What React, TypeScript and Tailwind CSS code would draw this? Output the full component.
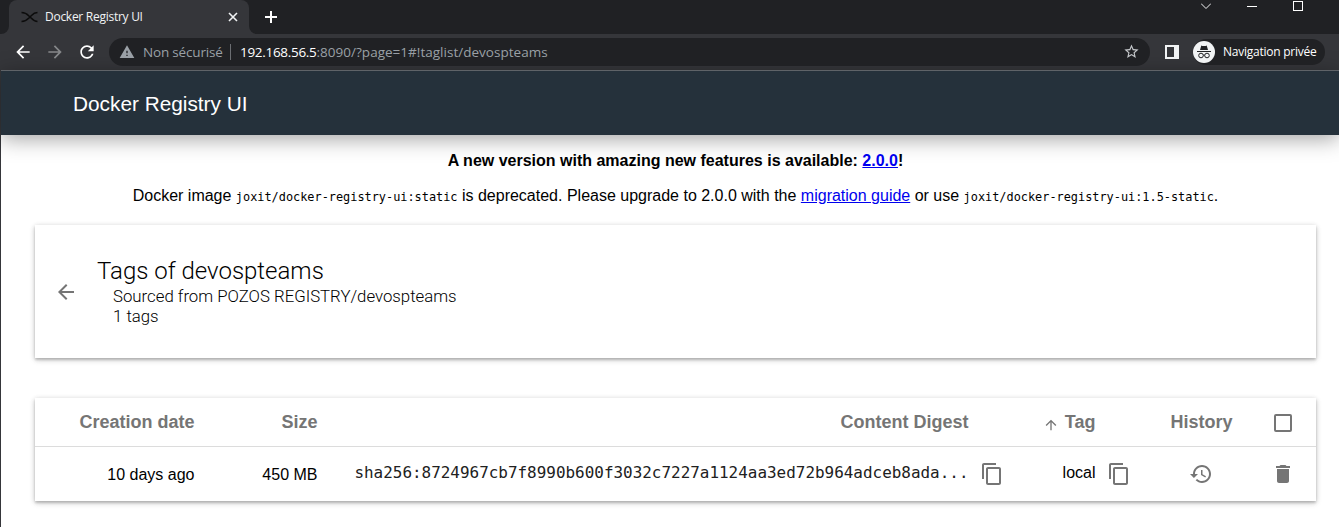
import React from "react";

const ui = "font-['Open_Sans','Noto_Sans',sans-serif]";

function Icon({ d, className }: { d: string; className: string }) {
  return (
    <svg viewBox="0 0 24 24" className={`shrink-0 fill-current ${className}`} aria-hidden="true">
      <path d={d} />
    </svg>
  );
}

const BACK = "M20 11H7.83l5.59-5.59L12 4l-8 8 8 8 1.41-1.41L7.83 13H20v-2z";
const FORWARD = "M12 4l-1.41 1.41L16.17 11H4v2h12.17l-5.58 5.59L12 20l8-8z";
const REFRESH =
  "M17.65 6.35C16.2 4.9 14.21 4 12 4c-4.42 0-7.99 3.58-7.99 8s3.57 8 7.99 8c3.73 0 6.84-2.55 7.73-6h-2.08c-.82 2.33-3.04 4-5.65 4-3.31 0-6-2.69-6-6s2.69-6 6-6c1.66 0 3.14.69 4.22 1.78L13 11h7V4l-2.35 2.35z";
const WARNING = "M1 21h22L12 2 1 21zm12-3h-2v-2h2v2zm0-4h-2v-4h2v4z";
const STAR =
  "M22 9.24l-7.19-.62L12 2 9.19 8.63 2 9.24l5.46 4.73L5.82 21 12 17.27 18.18 21l-1.63-7.03L22 9.24zM12 15.4l-3.76 2.27 1-4.28-3.32-2.88 4.38-.38L12 6.1l1.71 4.04 4.38.38-3.32 2.88 1 4.28L12 15.4z";
const COPY =
  "M16 1H4c-1.1 0-2 .9-2 2v14h2V3h12V1zm3 4H8c-1.1 0-2 .9-2 2v14c0 1.1.9 2 2 2h11c1.1 0 2-.9 2-2V7c0-1.1-.9-2-2-2zm0 16H8V7h11v14z";
const HISTORY =
  "M13 3c-4.97 0-9 4.03-9 9H1l3.89 3.89.07.14L9 12H6c0-3.87 3.13-7 7-7s7 3.13 7 7-3.13 7-7 7c-1.93 0-3.68-.79-4.94-2.06l-1.42 1.42C8.27 19.99 10.51 21 13 21c4.97 0 9-4.03 9-9s-4.03-9-9-9zm-1 5v5l4.28 2.54.72-1.21-3.5-2.08V8H12z";
const TRASH = "M6 19c0 1.1.9 2 2 2h8c1.1 0 2-.9 2-2V7H6v12zM19 4h-3.5l-1-1h-5l-1 1H5v2h14V4z";

function TabStrip() {
  return (
    <div className="flex h-[34px] items-start bg-[#202124]">
      <div className="flex h-[34px] w-[9px] items-end bg-[#35363a]">
        <div className="h-[34px] w-[9px] rounded-br-lg bg-[#202124]" />
      </div>
      <div className="flex h-[34px] w-[240px] items-center rounded-t-lg bg-[#35363a] pl-3 pr-2.5">
        <svg viewBox="0 0 18 12" className="h-3 w-[18px] fill-none stroke-[#0c0c0c] stroke-[1.5]">
          <path d="M.5 1.500c5 0 6 2 8.500 4.500s4 4.500 7.500 4.500M16.500 1.500c-4 0-5 2-7.500 4.500s-3.500 4.500-8.500 4.500" />
        </svg>
        <span className="ml-1.5 grow whitespace-nowrap text-[12px] leading-4 tracking-[-0.27px] text-[#f1f3f4]">Docker Registry UI</span>
        <svg viewBox="0 0 10 10" className="mr-px size-2.5 stroke-[#f1f3f4] stroke-[1.6]">
          <path d="M1 1l8 8M9 1l-8 8" />
        </svg>
      </div>
      <div className="flex h-[34px] w-2 bg-[#35363a]">
        <div className="h-[34px] w-2 rounded-bl-lg bg-[#202124]" />
      </div>
      <svg viewBox="0 0 12 12" className="ml-2 mt-[11px] size-3 stroke-white stroke-2">
        <path d="M6 0v12M0 6h12" />
      </svg>
      <div className="grow" />
      <svg viewBox="0 0 10 6" className="mr-[36px] mt-[3px] h-1.5 w-2.5 fill-none stroke-[#f1f3f4]">
        <path d="M0 .5l5 5 5-5" />
      </svg>
      <div className="mr-[36px] mt-1.5 h-px w-2.5 bg-white" />
      <div className="mr-9 mt-px size-2.5 border border-white" />
    </div>
  );
}

function Toolbar() {
  return (
    <div className="flex h-9 items-center bg-[#35363a] pb-px pl-[13px] pr-[14px]">
      <Icon d={BACK} className="size-[20px] text-white" />
      <Icon d={FORWARD} className="ml-3 size-[20px] text-[#86888a]" />
      <Icon d={REFRESH} className="ml-3 size-[20px] text-white" />
      <div className="ml-[12px] flex h-7 w-[1041px] items-center rounded-full bg-[#202124] pl-2.5 pr-2.5 leading-5">
        <Icon d={WARNING} className="size-4 text-[#9aa0a6]" />
        <span className="ml-2 w-[80px] whitespace-nowrap text-[13.5px] tracking-[-0.18px] text-[#9aa0a6]">Non sécurisé</span>
        <span className="ml-[7px] h-4 w-px bg-[#6b6e72]" />
        <span className="ml-[9px] grow whitespace-nowrap text-[13.5px] tracking-[-0.07px] text-[#9aa0a6]">
          <span className="tracking-[-0.3px] text-white">192.168.56.5</span>
          <span className="tracking-[0.02px]">:8090/?page=1#!taglist/devospteams</span>
        </span>
        <Icon d={STAR} className="size-[17px] text-[#c5c8cb]" />
      </div>
      <svg viewBox="0 0 14 14" className="ml-[15px] size-3.5 fill-[#f1f3f4]">
        <path fillRule="evenodd" d="M0 0h14v14H0zM2 2v10h7V2z" />
      </svg>
      <div className="ml-[14px] flex h-[26px] grow items-center rounded-full bg-[#202124]">
        <svg viewBox="0 0 22 22" className="size-[22px]">
          <circle cx="11" cy="11" r="11" fill="#f1f3f4" />
          <path d="M8.300 4.500l1 .4h3.400l1-.4 1.300 4.500H7z" fill="#202124" />
          <path d="M4 10.500h14" stroke="#202124" />
          <g fill="none" stroke="#202124">
            <circle cx="8" cy="14.500" r="2.300" />
            <circle cx="14" cy="14.500" r="2.300" />
            <path d="M10.300 14.200q.7-.5 1.400 0" />
          </g>
        </svg>
        <span className="ml-2 whitespace-nowrap text-[12px] leading-4 tracking-[-0.24px] text-white">Navigation privée</span>
      </div>
    </div>
  );
}

function Notice() {
  const code = "font-['DejaVu_Sans_Mono',monospace] text-[11.88px]";
  const link = "text-[#0000ee] underline";
  return (
    <div className="whitespace-nowrap pl-[11px] pt-[17px] text-center text-[16px] leading-[18px]">
      <p className="font-bold">
        A new version with amazing new features is available: <a className={link}>2.0.0</a>!
      </p>
      <p className="mt-[17px]">
        Docker image <code className={code}>joxit/docker-registry-ui:static</code> is deprecated. Please upgrade to 2.0.0 with the{" "}
        <a className={link}>migration guide</a> or use <code className={code}>joxit/docker-registry-ui:1.5-static</code>.
      </p>
    </div>
  );
}

const card = "ml-[34px] w-[1281px] bg-white shadow-[0_2px_2px_0_rgba(0,0,0,0.14),0_1px_5px_0_rgba(0,0,0,0.12),0_2px_6px_0_rgba(0,0,0,0.16)]";
const columns = "grid grid-cols-[159.500px_123px_651px_127px_108px_112px]";

function TagTable() {
  return (
    <div className={`${card} mt-10 h-[103px] text-[16px]`}>
      <div className={`${columns} h-[49px] items-center border-b border-[#dcdcdc] text-right text-[18px] font-bold text-[#757575]`}>
        <span>Creation date</span>
        <span>Size</span>
        <span>Content Digest</span>
        <span className="flex items-center justify-end">
          <Icon d="M4 12l1.410 1.410L11 7.830V20h2V7.830l5.580 5.590L20 12l-8-8-8 8z" className="mr-1.5 mt-1.5 size-4" />
          Tag
        </span>
        <span className="pl-[75px] text-left">History</span>
        <span className="flex pl-[70.500px]">
          <span className="mt-px size-[18px] rounded-[2px] border-2 border-[#757575]" />
        </span>
      </div>
      <div className={`${columns} h-[54px] items-center whitespace-nowrap text-right`}>
        <span className="pt-0.5">10 days ago</span>
        <span className="pt-0.5">450 MB</span>
        <span className="flex items-center justify-end">
          <span className="-mt-0.5 font-['DejaVu_Sans_Mono',monospace] text-[15.95px] text-[#212121]">sha256:8724967cb7f8990b600f3032c7227a1124aa3ed72b964adceb8ada...</span>
          <span className="-mr-[35px] ml-[11px] text-[#757575]">
            <Icon d={COPY} className="size-6" />
          </span>
        </span>
        <span className="flex items-center justify-end">
          <span className="-mt-0.5">local</span>
          <span className="-mr-[35px] ml-[11px] text-[#757575]">
            <Icon d={COPY} className="size-6" />
          </span>
        </span>
        <span className="flex pl-[93.500px] text-[#757575]">
          <Icon d={HISTORY} className="size-6" />
        </span>
        <span className="flex pl-[67.500px] text-[#757575]">
          <Icon d={TRASH} className="size-6" />
        </span>
      </div>
    </div>
  );
}

export default function App() {
  return (
    <div className="h-[527px] w-[1339px] overflow-hidden bg-white font-['Liberation_Sans',Arial,sans-serif] text-black">
      <div className={ui}>
        <TabStrip />
        <Toolbar />
      </div>
      <div className="h-[457px] border-l border-[#35363a]">
        <header className="flex h-[65px] items-center border-t border-[#5f6368] bg-[#25313b] pl-[72px] pt-0.5 text-[20.8px] text-white shadow-[0_4px_20px_rgba(0,0,0,0.36)]">
          Docker Registry UI
        </header>
        <Notice />
        <section className={`${card} mt-[19px] flex h-[133px] items-center pl-[19px] font-['Roboto',sans-serif] font-light`}>
          <Icon d={BACK} className="size-6 text-[#757575]" />
          <div className="ml-[19px] pt-px">
            <h1 className="text-[24px] leading-[27px] font-light">Tags of devospteams</h1>
            <div className="pl-4 pt-px text-[16.8px] leading-5">
              <p>Sourced from POZOS REGISTRY/devospteams</p>
              <p>1 tags</p>
            </div>
          </div>
        </section>
        <TagTable />
      </div>
    </div>
  );
}
